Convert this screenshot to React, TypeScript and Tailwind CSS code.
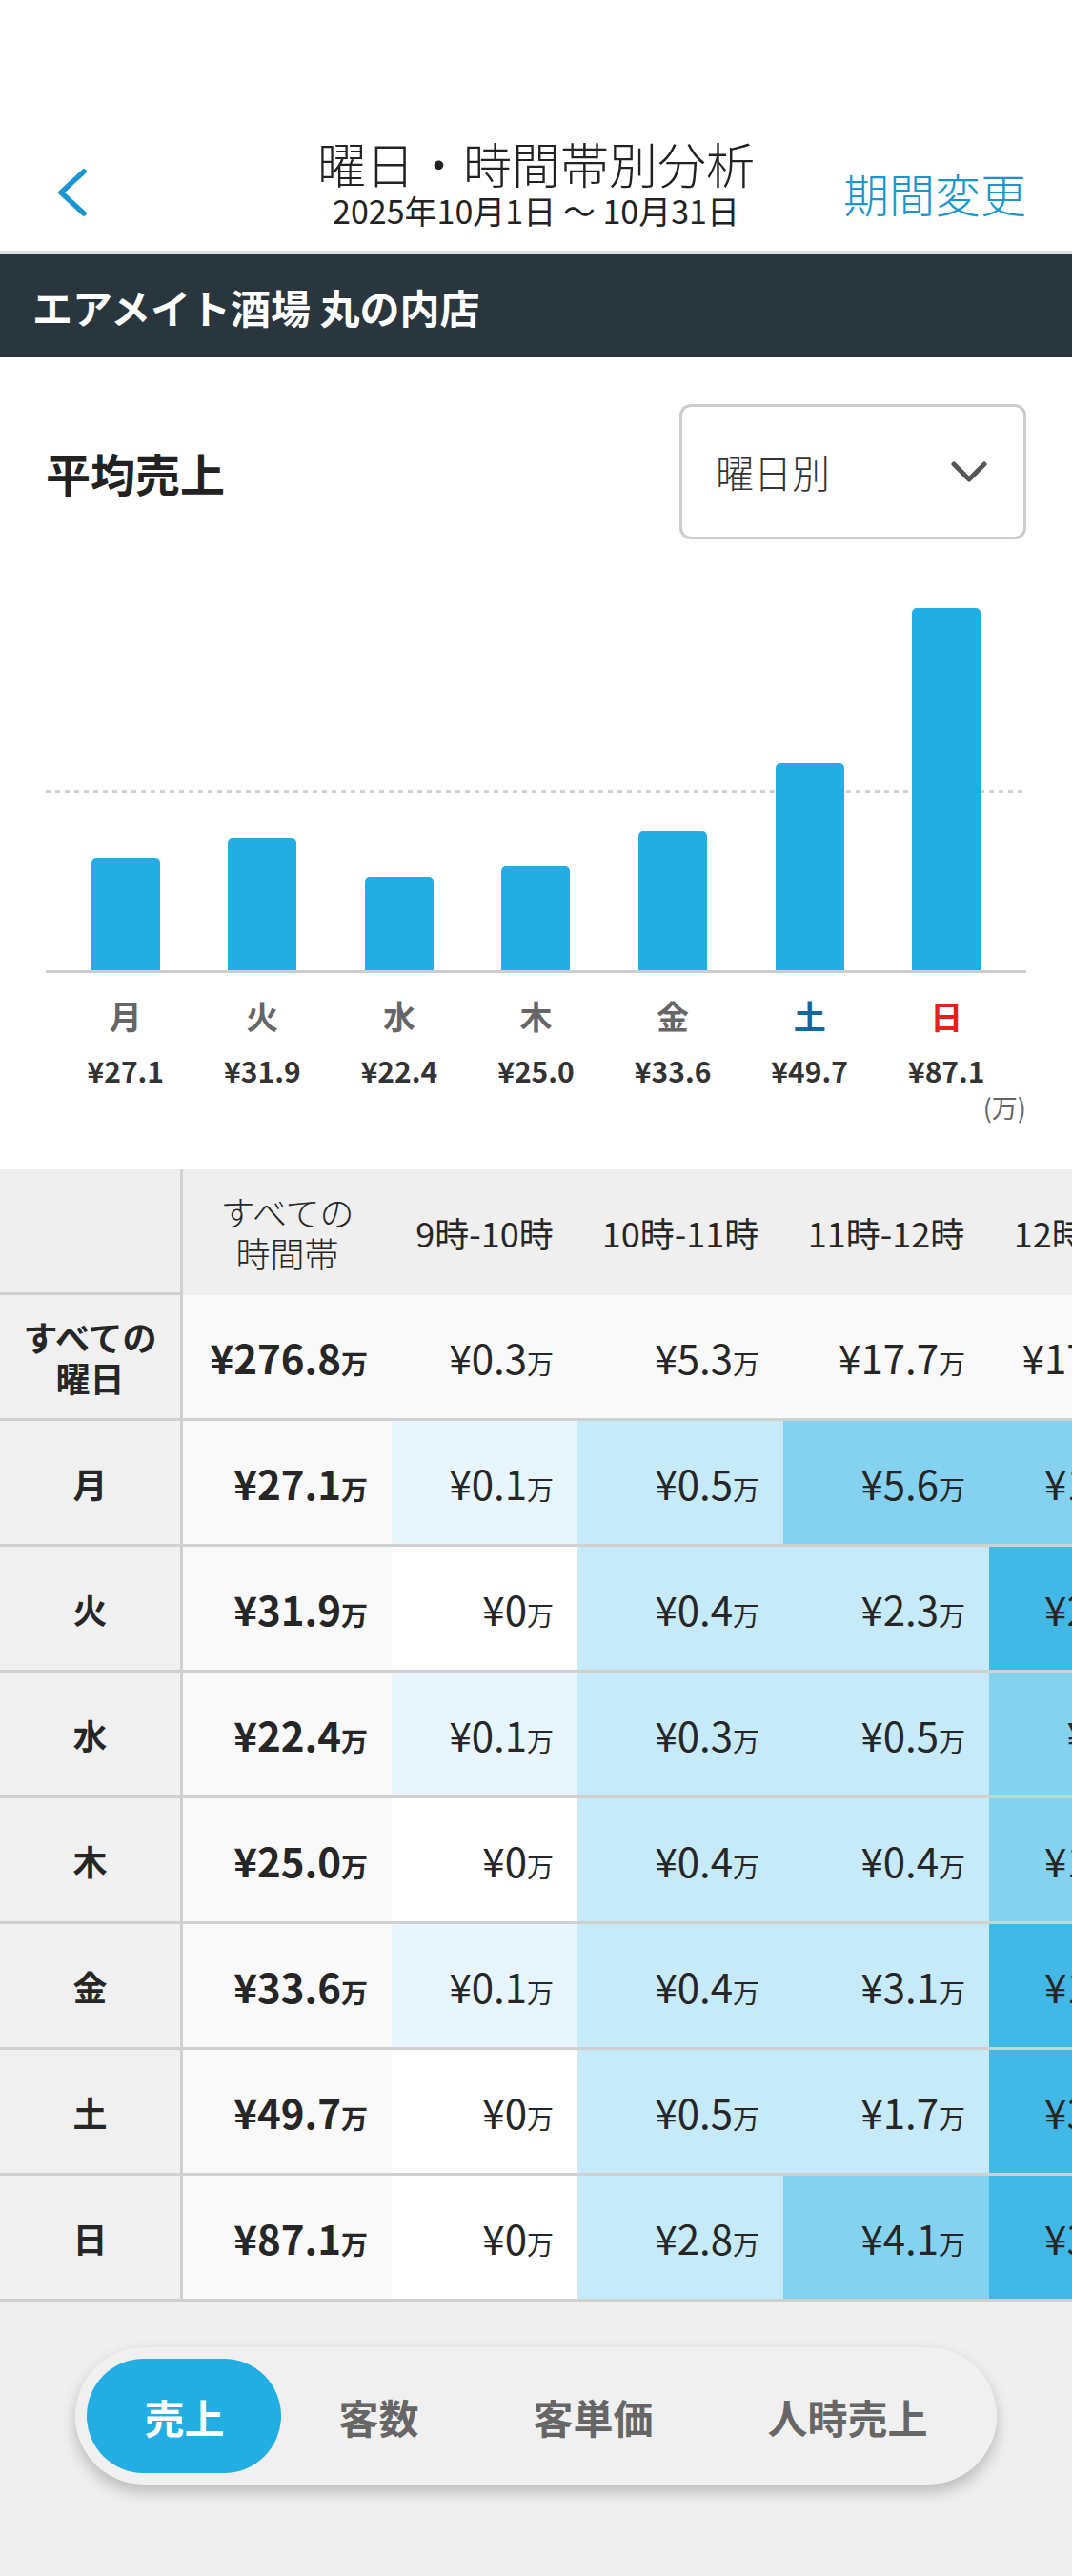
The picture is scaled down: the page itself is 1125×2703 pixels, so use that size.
import React from "react";

const days = [
  { label: "月", value: 27.1, color: "text-[#666666]" },
  { label: "火", value: 31.9, color: "text-[#666666]" },
  { label: "水", value: 22.4, color: "text-[#666666]" },
  { label: "木", value: 25.0, color: "text-[#666666]" },
  { label: "金", value: 33.6, color: "text-[#666666]" },
  { label: "土", value: 49.7, color: "text-[#17669c]" },
  { label: "日", value: 87.1, color: "text-[#e32119]" },
];

const heat: Record<number, string> = {
  0: "bg-white",
  1: "bg-[#e8f5fc]",
  2: "bg-[#c7eaf9]",
  3: "bg-[#84d1f0]",
  4: "bg-[#42b8e7]",
};

const columns = [
  { label: "9時-10時", w: "w-[195px]" },
  { label: "10時-11時", w: "w-[216px]" },
  { label: "11時-12時", w: "w-[216px]" },
  { label: "12時-13時", w: "w-[216px]" },
];

type Cell = [string, number];

const rows: { label: string; total: string; cells: Cell[] }[] = [
  { label: "月", total: "27.1", cells: [["0.1", 1], ["0.5", 2], ["5.6", 3], ["19.2", 3]] },
  { label: "火", total: "31.9", cells: [["0", 0], ["0.4", 2], ["2.3", 2], ["28.6", 4]] },
  { label: "水", total: "22.4", cells: [["0.1", 1], ["0.3", 2], ["0.5", 2], ["9.4", 3]] },
  { label: "木", total: "25.0", cells: [["0", 0], ["0.4", 2], ["0.4", 2], ["18.8", 3]] },
  { label: "金", total: "33.6", cells: [["0.1", 1], ["0.4", 2], ["3.1", 2], ["19.1", 4]] },
  { label: "土", total: "49.7", cells: [["0", 0], ["0.5", 2], ["1.7", 2], ["37.5", 4]] },
  { label: "日", total: "87.1", cells: [["0", 0], ["2.8", 2], ["4.1", 3], ["38.9", 4]] },
];

const allDays = ["0.3", "5.3", "17.7", "171.5"];

function Yen({ v, bold }: { v: string; bold?: boolean }) {
  return (
    <span className={`leading-none whitespace-nowrap text-[#262626] ${bold ? "font-bold" : "font-normal"}`}>
      <span className="text-[42px]">¥{v}</span>
      <span className="text-[28px]">万</span>
    </span>
  );
}

export default function App() {
  return (
    <div className="min-h-screen flex flex-col bg-white font-['Noto_Sans_CJK_JP',sans-serif] text-[#222222]">
      {/* Header */}
      <header className="h-[263px] flex items-start pt-[142px] px-[48px]">
        <div className="w-[190px] pl-[12px] mt-[35px]">
          <svg width="32" height="50" viewBox="0 0 32 50" fill="none">
            <polyline points="28,3 4,25 28,47" stroke="#1a96cf" strokeWidth="5.5" strokeLinecap="round" strokeLinejoin="round" />
          </svg>
        </div>
        <div className="flex-1 flex flex-col items-center">
          <div className="text-[51px] leading-[58px] font-light whitespace-nowrap">曜日・時間帯別分析</div>
          <div className="text-[34px] leading-[42px] whitespace-nowrap">2025年10月1日 〜 10月31日</div>
        </div>
        <div className="w-[190px] flex justify-end mt-[34px]">
          <span className="text-[48px] leading-[52px] font-light text-[#1a96cf] whitespace-nowrap">期間変更</span>
        </div>
      </header>
      <div className="h-[4px] bg-[#dedede]" />
      <div className="h-[108px] bg-[#2a363d] flex items-center pl-[34px]">
        <span className="text-[42px] font-bold text-white">エアメイト酒場 丸の内店</span>
      </div>

      {/* Average sales */}
      <section className="px-[48px]">
        <div className="flex items-center justify-between mt-[49px]">
          <h2 className="text-[47px] font-bold leading-none">平均売上</h2>
          <div className="w-[364px] h-[142px] border-[3px] border-[#cccccc] rounded-[12px] flex items-center justify-between pl-[35px] pr-[38px]">
            <span className="text-[40px] font-light text-[#333333]">曜日別</span>
            <svg width="38" height="22" viewBox="0 0 38 22" fill="none">
              <polyline points="3,3 19,19 35,3" stroke="#555555" strokeWidth="5" strokeLinecap="round" strokeLinejoin="round" />
            </svg>
          </div>
        </div>

        <div className="relative h-[452px]">
          <div className="absolute left-0 right-0 bottom-[186px] h-[3px] bg-[repeating-linear-gradient(90deg,#d2d2d2_0_5px,transparent_5px_10px)]" />
          <div className="relative z-10 h-full grid grid-cols-7 px-[12px] items-end">
            {days.map((d) => (
              <div key={d.label} className="flex justify-center">
                <div className="w-[72px] rounded-t-[5px] bg-[#22ade3]" style={{ height: d.value * 4.36 }} />
              </div>
            ))}
          </div>
        </div>
        <div className="h-[3px] bg-[#cccccc]" />
        <div className="grid grid-cols-7 px-[12px] mt-[25px]">
          {days.map((d) => (
            <div key={d.label} className={`text-center text-[34px] leading-[40px] font-bold ${d.color}`}>
              {d.label}
            </div>
          ))}
        </div>
        <div className="grid grid-cols-7 px-[12px] mt-[19px]">
          {days.map((d) => (
            <div key={d.label} className="text-center text-[30px] leading-[36px] font-bold text-[#333333]">
              ¥{d.value.toFixed(1)}
            </div>
          ))}
        </div>
        <div className="text-right text-[27px] leading-[32px] text-[#666666] mt-[5px] mb-[49px]">(万)</div>
      </section>

      {/* Heat table */}
      <div className="overflow-hidden w-full">
        <div className="flex h-[132px]">
          <div className="w-[192px] shrink-0 bg-[#efefef] border-r-[3px] border-b-[3px] border-[#d0d0d0]" />
          <div className="w-[219px] shrink-0 bg-[#efefef] flex items-center justify-center text-center text-[36px] leading-[43px] font-light text-[#262626]">
            すべての
            <br />
            時間帯
          </div>
          {columns.map((c) => (
            <div key={c.label} className={`${c.w} shrink-0 bg-[#efefef] flex items-center justify-center text-[36px] text-[#262626] whitespace-nowrap`}>
              {c.label}
            </div>
          ))}
        </div>

        <div className="flex h-[132px] border-b-[3px] border-[#d0d0d0]">
          <div className="w-[192px] shrink-0 bg-[#f0f0f0] border-r-[3px] border-[#d0d0d0] flex items-center justify-center text-center text-[36px] leading-[43px] font-bold text-[#262626]">
            すべての
            <br />
            曜日
          </div>
          <div className="w-[219px] shrink-0 bg-[#f9f9f9] flex items-center justify-end pr-[25px]">
            <Yen v="276.8" bold />
          </div>
          {columns.map((c, i) => (
            <div key={c.label} className={`${c.w} shrink-0 bg-[#f9f9f9] flex items-center justify-end pr-[25px]`}>
              <Yen v={allDays[i]} />
            </div>
          ))}
        </div>

        {rows.map((r) => (
          <div key={r.label} className="flex h-[132px] border-b-[3px] border-[#d0d0d0]">
            <div className="w-[192px] shrink-0 bg-[#f0f0f0] border-r-[3px] border-[#d0d0d0] flex items-center justify-center text-[36px] font-bold text-[#262626]">
              {r.label}
            </div>
            <div className="w-[219px] shrink-0 bg-[#f9f9f9] flex items-center justify-end pr-[25px]">
              <Yen v={r.total} bold />
            </div>
            {columns.map((c, i) => (
              <div key={c.label} className={`${c.w} shrink-0 ${heat[r.cells[i][1]]} flex items-center justify-end pr-[25px]`}>
                <Yen v={r.cells[i][0]} />
              </div>
            ))}
          </div>
        ))}
      </div>

      {/* Metric switcher */}
      <div className="flex-1 bg-[#efefef] flex justify-center pt-[48px] pb-[96px]">
        <div className="h-[144px] p-[12px] rounded-full bg-[#f0f0f0] shadow-[0_8px_16px_rgba(0,0,0,0.22)] flex">
          {["売上", "客数", "客単価", "人時売上"].map((t, i) => (
            <div
              key={t}
              className={`h-[120px] px-[60px] rounded-full flex items-center text-[42px] font-bold whitespace-nowrap ${
                i === 0 ? "bg-[#22ade3] text-white" : "text-[#666666]"
              }`}
            >
              {t}
            </div>
          ))}
        </div>
      </div>
    </div>
  );
}
